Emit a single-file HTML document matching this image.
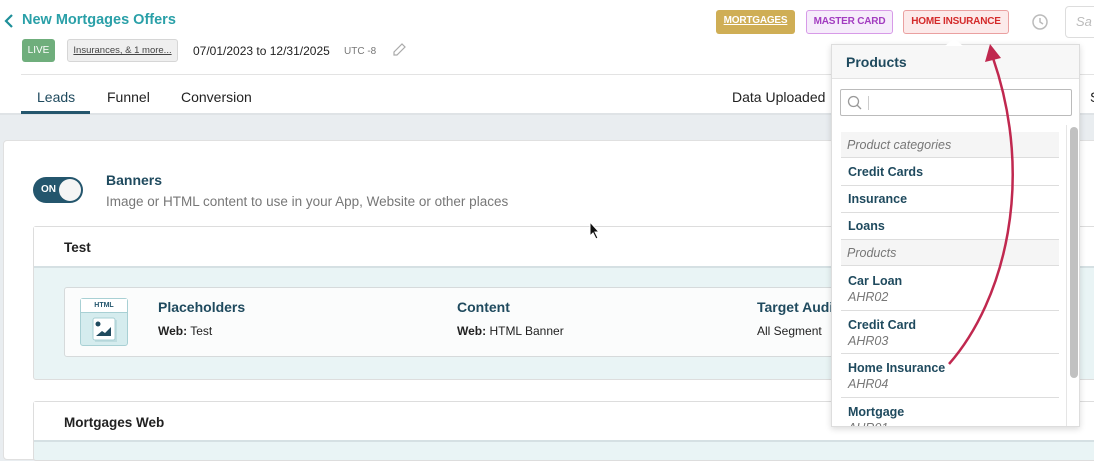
<!DOCTYPE html>
<html><head><style>
*{box-sizing:border-box;margin:0;padding:0}
body{width:1094px;height:449px;overflow:hidden;background:#e9edf0;font-family:"Liberation Sans",Arial,sans-serif;position:relative;color:#222}
.abs{position:absolute}
.hdr{left:0;top:0;width:1094px;height:115px;background:#fff;border-bottom:2px solid #dfe3e6}
.tag{position:absolute;top:10px;height:24px;border-radius:3px;font-size:10px;font-weight:bold;line-height:22px;text-align:center;letter-spacing:-0.2px}
.item{position:absolute;left:0;width:218px;border-bottom:1px solid #ddd;padding-left:7px;font-size:12.5px;font-weight:bold;color:#1f4a5e}
.item i{display:block;font-weight:normal;color:#777;font-size:12.5px;margin-top:2px}
.cat{position:absolute;left:0;width:218px;background:#f5f5f5;border-bottom:1px solid #ddd;padding-left:6px;font-size:12.5px;font-style:italic;color:#777;height:26px;line-height:26px}
</style></head><body>
<div class="abs hdr">
 <svg class="abs" style="left:3px;top:13px" width="12" height="16"><path d="M9 2 L3 8 L9 14" stroke="#1e8f99" stroke-width="2.2" fill="none"/></svg>
 <div class="abs" style="left:22px;top:12px;font-size:14.5px;font-weight:bold;color:#2aa0a8">New Mortgages Offers</div>
 <div class="abs" style="left:22px;top:39px;width:33px;height:23px;background:#6fae7c;border-radius:3px;color:#fff;font-size:10px;line-height:23px;text-align:center">LIVE</div>
 <div class="abs" style="left:67px;top:39px;width:111px;height:23px;background:#efefef;border:1px solid #d6d6d6;border-radius:3px;font-size:9.5px;line-height:21px;text-align:center;text-decoration:underline;color:#444">Insurances, &amp; 1 more...</div>
 <div class="abs" style="left:193px;top:44px;font-size:12px">07/01/2023 to 12/31/2025</div>
 <div class="abs" style="left:344px;top:46px;font-size:10px;color:#777">UTC -8</div>
 <svg class="abs" style="left:391px;top:42px" width="16" height="16"><path d="M3 13 L3 10 L11 2 L14 5 L6 13 Z" stroke="#aaa" stroke-width="1.2" fill="none"/></svg>
 <div class="abs" style="left:21px;top:74px;width:1073px;height:1px;background:#e3e3e3"></div>
 <div class="abs" style="left:37px;top:89px;font-size:14px;color:#1f4a5e">Leads</div>
 <div class="abs" style="left:21px;top:111px;width:69px;height:3px;background:#24566d"></div>
 <div class="abs" style="left:107px;top:89px;font-size:14px">Funnel</div>
 <div class="abs" style="left:181px;top:89px;font-size:14px">Conversion</div>
 <div class="abs" style="left:732px;top:89px;font-size:14px">Data Uploaded</div>
 <div class="abs" style="left:1090px;top:89px;font-size:14px">S</div>
 <div class="tag" style="left:716px;width:79px;background:#cfae55;color:#fff;text-decoration:underline">MORTGAGES</div>
 <div class="tag" style="left:806px;width:87px;background:#f6ecfb;border:1px solid #d79ae8;color:#a23cc0">MASTER CARD</div>
 <div class="tag" style="left:903px;width:106px;background:#fceaea;border:1px solid #eaa0a0;color:#d42a2a">HOME INSURANCE</div>
 <svg class="abs" style="left:1030px;top:12px" width="20" height="20"><circle cx="10" cy="10" r="7" stroke="#bbb" stroke-width="1.5" fill="none"/><path d="M10 6 V10 L13 12" stroke="#bbb" stroke-width="1.5" fill="none"/></svg>
 <div class="abs" style="left:1065px;top:6px;width:40px;height:32px;border:1px solid #ddd;border-radius:4px;font-size:13px;color:#bbb;font-style:italic;line-height:30px;padding-left:10px">Sa</div>
</div>
<div class="abs" style="left:3px;top:140px;width:1100px;height:320px;background:#fff;border-radius:4px;border:1px solid #e0e0e0"></div>
<div class="abs" style="left:33px;top:177px;width:50px;height:26px;background:#24566d;border-radius:13px"><span class="abs" style="left:8px;top:7px;color:#fff;font-size:10px;font-weight:bold">ON</span><div class="abs" style="left:26px;top:2px;width:22px;height:22px;border-radius:50%;background:#f5f5f5"></div></div>
<div class="abs" style="left:106px;top:172px;font-size:14px;font-weight:bold;color:#1f4a5e">Banners</div>
<div class="abs" style="left:106px;top:194px;font-size:13.5px;color:#777">Image or HTML content to use in your App, Website or other places</div>
<div class="abs" style="left:33px;top:226px;width:1070px;height:154px;border:1px solid #ddd;border-radius:3px;background:#e9f4f5">
 <div style="height:41px;background:#fff;border-bottom:2px solid #d5e0e3;padding:13px 30px;font-size:13.5px;font-weight:bold">Test</div>
</div>
<div class="abs" style="left:64px;top:287px;width:1000px;height:70px;background:#fbfcfc;border:1px solid #d6dadb;border-radius:3px"></div>
<div class="abs" style="left:80px;top:298px;width:48px;height:48px;background:#d5ecee;border:1px solid #a8d0d4;border-radius:3px">
 <div style="height:14px;background:#fff;border-bottom:1px solid #a8d0d4;font-size:7px;font-weight:bold;color:#24566d;text-align:center;line-height:14px">HTML</div>
 <svg class="abs" style="left:11px;top:18px" width="26" height="26"><rect x="3" y="3" width="22" height="22" fill="#bfdde0"/><rect x="1" y="1" width="22" height="22" rx="2" fill="#fff" stroke="#a8d0d4"/><circle cx="6" cy="7" r="2.5" fill="#1f4a5e"/><path d="M4 19 L10 14 L13 16 L19 10 L19 19 Z" fill="#1f4a5e"/></svg>
</div>
<div class="abs" style="left:158px;top:299px;font-size:14px;font-weight:bold;color:#1f4a5e">Placeholders</div>
<div class="abs" style="left:158px;top:324px;font-size:12px"><b>Web:</b> Test</div>
<div class="abs" style="left:457px;top:299px;font-size:14px;font-weight:bold;color:#1f4a5e">Content</div>
<div class="abs" style="left:457px;top:324px;font-size:12px"><b>Web:</b> HTML Banner</div>
<div class="abs" style="left:757px;top:299px;font-size:14px;font-weight:bold;color:#1f4a5e">Target Audi</div>
<div class="abs" style="left:757px;top:324px;font-size:12px">All Segment</div>
<div class="abs" style="left:33px;top:401px;width:1070px;height:60px;border:1px solid #ddd;border-radius:3px;background:#e9f4f5">
 <div style="height:40px;background:#fff;border-bottom:2px solid #d5e0e3;padding:13px 30px;font-size:13.5px;font-weight:bold">Mortgages Web</div>
</div>
<svg class="abs" style="left:588px;top:220px" width="14" height="20"><path d="M2 2 L2 16 L5 13 L8 19 L10 18 L7 12 L11 12 Z" fill="#111" stroke="#fff" stroke-width="1"/></svg>
<div class="abs" style="left:831px;top:44px;width:249px;height:383px;background:#fff;border:1px solid #ddd;box-shadow:0 2px 6px rgba(0,0,0,.15);overflow:hidden">
 <div style="height:34px;background:#f7f7f7;border-bottom:1px solid #e3e3e3;padding:9px 14px;font-size:14px;font-weight:bold;color:#1f4a5e">Products</div>
 <div class="abs" style="left:8px;top:44px;width:232px;height:27px;border:1px solid #bbb;border-radius:2px"><svg class="abs" style="left:6px;top:5px" width="16" height="16"><circle cx="6.5" cy="6.5" r="5" stroke="#999" stroke-width="1.3" fill="none"/><path d="M10 10 L14 14" stroke="#999" stroke-width="1.3"/></svg><div class="abs" style="left:27px;top:6px;width:1px;height:14px;background:#ccc"></div></div>
 <div class="abs" style="left:9px;top:87px;width:218px;height:300px">
  <div class="cat" style="top:0">Product categories</div>
  <div class="item" style="top:27px;height:27px;line-height:27px">Credit Cards</div>
  <div class="item" style="top:54px;height:27px;line-height:27px">Insurance</div>
  <div class="item" style="top:81px;height:27px;line-height:27px">Loans</div>
  <div class="cat" style="top:108px">Products</div>
  <div class="item" style="top:135px;height:44px;padding-top:7px">Car Loan<i>AHR02</i></div>
  <div class="item" style="top:179px;height:43px;padding-top:7px">Credit Card<i>AHR03</i></div>
  <div class="item" style="top:222px;height:44px;padding-top:7px">Home Insurance<i>AHR04</i></div>
  <div class="item" style="top:266px;height:44px;padding-top:7px;border:none">Mortgage<i>AHR01</i></div>
 </div>
 <div class="abs" style="left:234px;top:80px;width:1px;height:303px;background:#e5e5e5"></div>
 <div class="abs" style="left:238px;top:82px;width:8px;height:251px;background:#c1c1c1;border-radius:4px"></div>
</div>
<svg class="abs" style="left:945px;top:36px" width="30" height="10"><path d="M0 10 L9 2 L18 10 Z" fill="#fff"/></svg>
<svg class="abs" style="left:0;top:0" width="1094" height="449"><path d="M949 364 C1005 300 1035 180 993 58" stroke="#c0284f" stroke-width="2.5" fill="none"/><path d="M990 44 L985 62 L1001 58 Z" fill="#c0284f"/></svg>
</body></html>
